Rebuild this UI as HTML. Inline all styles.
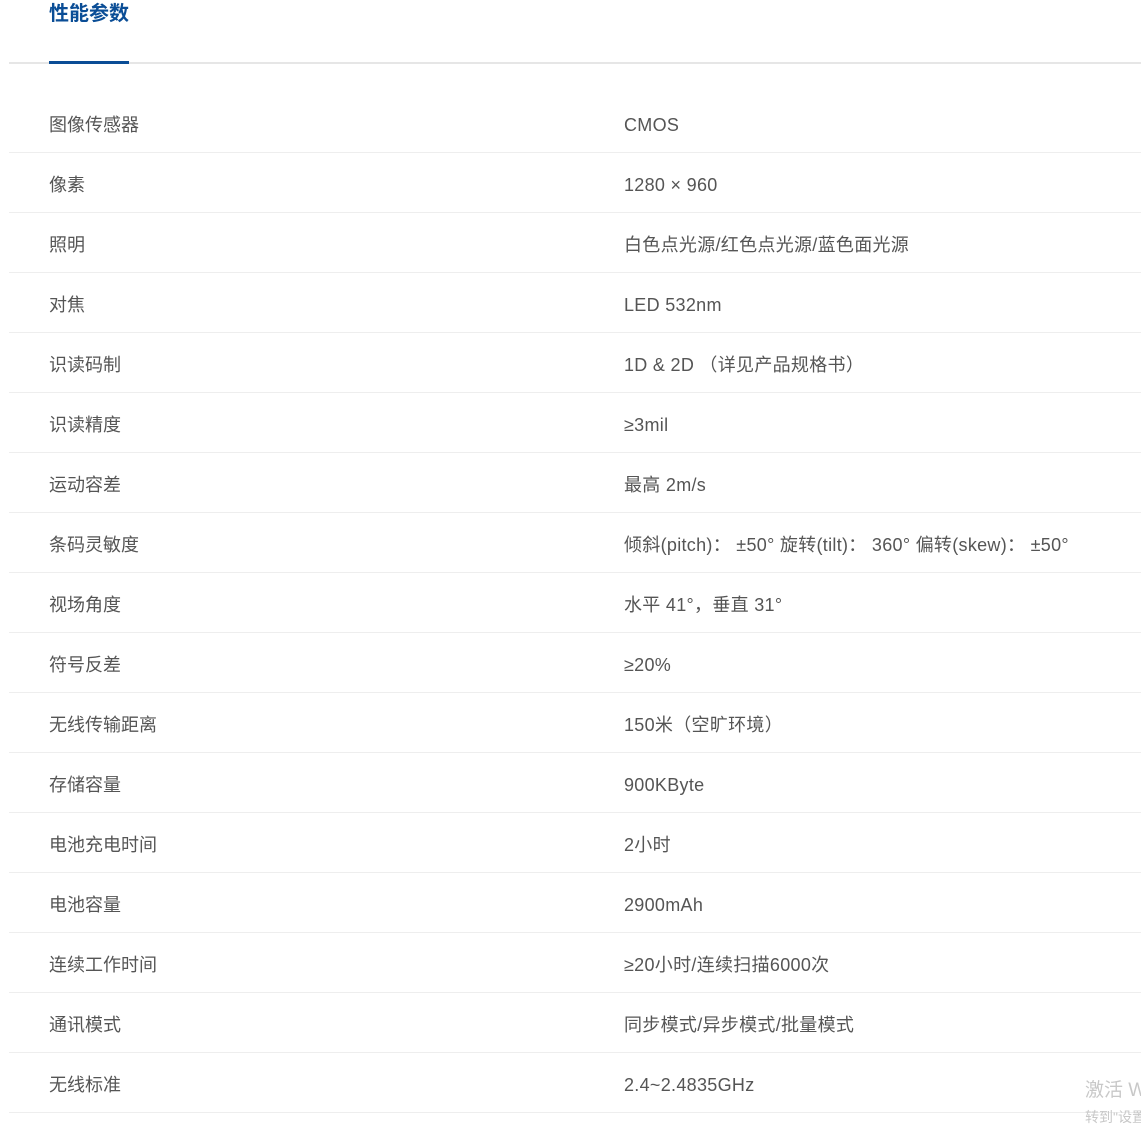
<!DOCTYPE html>
<html><head><meta charset="utf-8"><style>
body{margin:0;background:#fff;width:1141px;height:1140px;overflow:hidden;font-family:"Liberation Sans","Noto Sans CJK SC",sans-serif;}
.title{position:absolute;left:49px;top:1px;font-size:20px;font-weight:bold;color:#0a4d96;line-height:26px;}
.hline{position:absolute;left:9px;right:0;top:62px;height:2px;background:#e6e6e6;}
.uline{position:absolute;left:49px;width:80px;top:61px;height:3px;background:#0a4d96;}
.rows{position:absolute;left:9px;right:0;top:93px;}
.row{height:59px;border-bottom:1px solid #eee;position:relative;font-size:18px;color:#555;}
.row span{position:absolute;top:2px;line-height:60px;}
.a{left:40px}.b{left:615px;letter-spacing:0.3px}
.wm{position:absolute;left:1085px;top:1079px;color:#c8c8c8;font-size:19px;line-height:24px;white-space:nowrap}
.wm2{position:absolute;left:1085px;top:1107px;color:#c8c8c8;font-size:14px;white-space:nowrap}
</style></head><body>
<div class="title">性能参数</div>
<div class="hline"></div><div class="uline"></div>
<div class="rows">
<div class="row"><span class="a">图像传感器</span><span class="b">CMOS</span></div>
<div class="row"><span class="a">像素</span><span class="b">1280 × 960</span></div>
<div class="row"><span class="a">照明</span><span class="b">白色点光源/红色点光源/蓝色面光源</span></div>
<div class="row"><span class="a">对焦</span><span class="b">LED 532nm</span></div>
<div class="row"><span class="a">识读码制</span><span class="b">1D &amp; 2D （详见产品规格书）</span></div>
<div class="row"><span class="a">识读精度</span><span class="b">≥3mil</span></div>
<div class="row"><span class="a">运动容差</span><span class="b">最高 2m/s</span></div>
<div class="row"><span class="a">条码灵敏度</span><span class="b">倾斜(pitch)： ±50° 旋转(tilt)： 360° 偏转(skew)： ±50°</span></div>
<div class="row"><span class="a">视场角度</span><span class="b">水平 41°，垂直 31°</span></div>
<div class="row"><span class="a">符号反差</span><span class="b">≥20%</span></div>
<div class="row"><span class="a">无线传输距离</span><span class="b">150米（空旷环境）</span></div>
<div class="row"><span class="a">存储容量</span><span class="b">900KByte</span></div>
<div class="row"><span class="a">电池充电时间</span><span class="b">2小时</span></div>
<div class="row"><span class="a">电池容量</span><span class="b">2900mAh</span></div>
<div class="row"><span class="a">连续工作时间</span><span class="b">≥20小时/连续扫描6000次</span></div>
<div class="row"><span class="a">通讯模式</span><span class="b">同步模式/异步模式/批量模式</span></div>
<div class="row"><span class="a">无线标准</span><span class="b">2.4~2.4835GHz</span></div>
</div>
<div class="wm">激活 W</div>
<div class="wm2">转到"设置</div>
</body></html>
